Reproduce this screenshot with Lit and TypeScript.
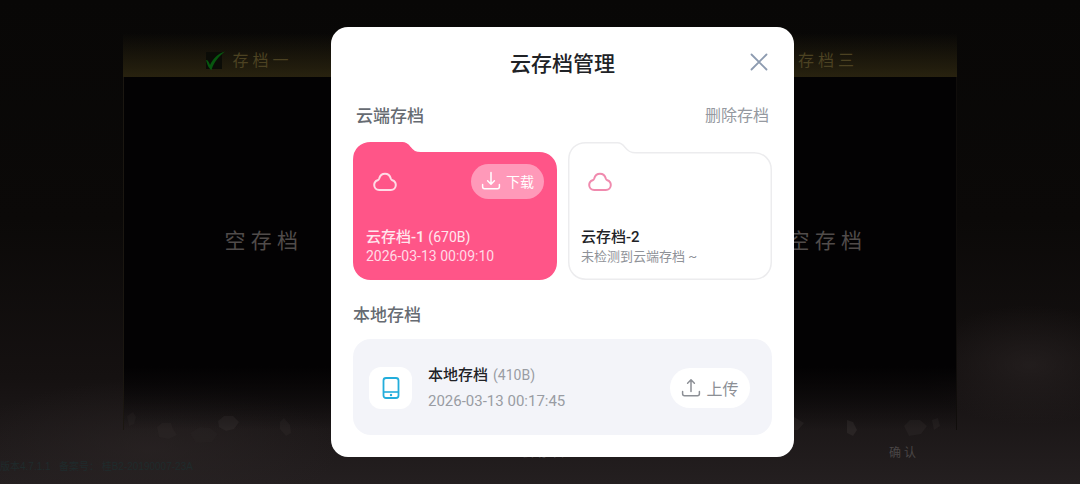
import { LitElement, html, svg, css } from "lit";
import { customElement, property } from "lit/decorators.js";

const arrowTray = (up: boolean) => html`
  <svg width="20" height="20" viewBox="0 0 20 20" fill="none" stroke="currentColor"
    stroke-width="1.5" stroke-linecap="round" stroke-linejoin="round" aria-hidden="true">
    ${up
      ? svg`<path d="M10 13.500V2M6.600 5.200 10 1.800l3.400 3.400" />`
      : svg`<path d="M10 1.500V13M6.600 9.800 10 13.200l3.400-3.400" />`}
    <path d="M1.600 13.600v2.200c0 1.200.8 2 2 2h12.800c1.200 0 2-.8 2-2v-2.200" />
  </svg>`;

@customElement("save-folder")
class SaveFolder extends LitElement {
  @property({ type: Boolean }) filled = false;

  static styles = css`
    :host { display: grid; min-width: 0; }
    .shape, .content { grid-area: 1 / 1; }
    .shape { width: 100%; height: 100%; display: block; }
    .edge { fill: #ffffff; stroke: #ececee; stroke-width: 1.5; }
    .edge.filled { fill: #ff5588; stroke: #ff5588; }
    .content {
      display: flex; flex-direction: column; justify-content: space-between;
      min-height: 138px; box-sizing: border-box; padding: 20px 13px 14px;
      color: #8f9298; font-size: 13px;
    }
    .content.filled { color: #ffdbe6; font-size: 14px; }
    .top { display: flex; justify-content: space-between; align-items: center; height: 38px; padding-left: 6px; }
    .cloud { color: #f08aae; display: block; }
    .filled .cloud { color: #ffdbe6; }
    .text { display: flex; flex-direction: column; line-height: 19px; }
  `;

  render() {
    const kind = this.filled ? "filled" : "";
    return html`
      <svg class="shape" viewBox="0 0 205 138" preserveAspectRatio="none" aria-hidden="true">
        <path class="edge ${kind}"
          d="M.75 18C.75 7 8 .75 18 .75h31.500c3.500 0 5.500 1.500 7.500 4.250 3.500 4.500 6 5.750 11 5.750h119c10 0 17.250 7.250 17.250 17.250v92c0 10-7.250 17.250-17.250 17.250H18C8 137.250.75 130 .75 120z" />
      </svg>
      <div class="content ${kind}">
        <div class="top">
          <svg class="cloud" width="26" height="22" viewBox="0 0 26 22" fill="none"
            stroke="currentColor" stroke-width="2" stroke-linejoin="round" aria-hidden="true">
            <path d="M7.200 20h11.600c2.900 0 5-2.200 5-4.900 0-2.400-1.300-4.200-3.500-4.900-.9-.3-1.200-.8-1.500-1.700C17.900 5.500 15.800 3.800 13 3.800S8.100 5.500 7.200 8.500c-.3.9-.6 1.400-1.500 1.700-2.200.7-3.500 2.500-3.500 4.900 0 2.700 2.100 4.900 5 4.900z" />
          </svg>
          <slot name="action"></slot>
        </div>
        <div class="text"><slot></slot></div>
      </div>`;
  }
}

@customElement("game-backdrop")
class GameBackdrop extends LitElement {
  static styles = css`
    :host { display: grid; min-height: 100vh; background: linear-gradient(#080706, #0b0908 45%, #151111 78%, #241f20); }
    .scenery, .stage { grid-area: 1 / 1; }
    .scenery { width: 100%; height: 100%; min-height: 0; display: block; contain: size; }
    .stage {
      display: flex; flex-direction: column; min-width: 0;
      padding-top: 33px; padding-bottom: 11px;
      font-family: "Liberation Serif", "Noto Sans CJK SC", serif;
      color: #504b4a; z-index: 1;
    }
    .panel { flex: 1; display: flex; flex-direction: column; margin: 0 11.4%; }
    .heads, .slots { display: grid; grid-template-columns: 275fr 297fr 262fr; justify-items: center; align-items: center; }
    .heads {
      height: 44px; padding-top: 11px; box-sizing: border-box;
      background: linear-gradient(rgba(38, 33, 18, 0), #28220f);
      font-size: 16px; line-height: 20px; color: #4c4222;
    }
    .head { display: flex; align-items: center; gap: 8px; }
    .checked { padding-right: 28px; }
    .slots {
      flex: 1; padding-bottom: 26px; box-sizing: border-box;
      background: linear-gradient(#030203 82%, rgba(3, 2, 3, 0));
      border-left: 1px solid #1b1711; border-right: 1px solid #100d0b;
      font-size: 21px; line-height: 28px;
    }
    .actions { display: grid; grid-template-columns: 1fr auto 1fr; margin: 0 11.4%; padding: 15px 41px 0 47px; }
    .action {
      grid-column: 2; border: 0; padding: 0; background: none; color: #4a4646;
      font: inherit; font-size: 12px; line-height: 16px;
    }
    .last { grid-column: 3; justify-self: end; }
    .version { font-size: 10px; line-height: 12px; color: #1f2b2c; font-family: "Liberation Sans", "Noto Sans CJK SC", sans-serif; white-space: pre; }
  `;

  render() {
    return html`
      <svg class="scenery" viewBox="0 0 1080 484" preserveAspectRatio="none" aria-hidden="true">
        <defs>
          <radialGradient id="fog"><stop offset="0" stop-color="#2b2525" stop-opacity=".6" /><stop offset="1" stop-color="#2b2525" stop-opacity="0" /></radialGradient>
        </defs>
        <ellipse cx="150" cy="450" rx="190" ry="70" fill="url(#fog)" />
        <ellipse cx="1030" cy="365" rx="110" ry="60" fill="url(#fog)" />
      </svg>
      <div class="stage">
        <div class="panel">
          <div class="heads">
            <span class="head checked">
              <svg width="20" height="20" viewBox="0 0 20 20" aria-hidden="true">
                <path d="M1 1h16v17H1z" fill="#0b0c07" />
                <path d="M1 9c2 0 3 2 4 5C8 8 12 3 20 .5 14 5 9 11 6.500 19 4 18 2 13 1 9z" fill="#07560f" />
              </svg>存 档 一</span>
            <span class="head"></span>
            <span class="head">存 档 三</span>
          </div>
          <div class="slots"><span>空 存 档</span><span></span><span>空 存 档</span></div>
        </div>
        <div class="actions">
          <button class="action">云 存 档</button>
          <button class="action last">确 认</button>
        </div>
        <div class="version">版本4.7.1.1   备案号： 桂B2-20190007-23A</div>
      </div>
      <svg class="scenery" viewBox="0 0 1080 484" preserveAspectRatio="none" aria-hidden="true">
        <g fill="#292424">
          <path d="M218 421l6-5h9l6 6-5 7-8 2-7-4z" />
          <path d="M157 427l5-4h9l2 6 4 6-8 4-10-2z" opacity=".7" />
          <path d="M280 422l4-4 6 7 1 8-5 3-6-7z" opacity=".6" />
          <path d="M127 416l6-4 3 5-2 7-5 2z" opacity=".7" />
          <path d="M190 433l10-6 10 1 8 6-6 8-16 1z" opacity=".4" />
          <path d="M794 417l10 6-6 7h-4z" opacity=".8" />
          <path d="M847 420l6 2 4 8-4 6-6-3z" />
          <path d="M904 426l6-6h10l7 6-6 8-12 2z" opacity=".6" />
          <path d="M932 420l6-2 2 8-6 4z" opacity=".6" />
        </g>
      </svg>`;
  }
}

@customElement("app-root")
class AppRoot extends LitElement {
  static styles = css`
    :host {
      display: grid; min-height: 100vh;
      font-family: Roboto, "Noto Sans CJK SC", sans-serif; color: #202226;
    }
    .backdrop, .overlay { grid-area: 1 / 1; min-width: 0; }
    .overlay { display: grid; place-items: center; padding-left: 45px; z-index: 2; }
    .dialog {
      width: 100%; max-width: 463px; box-sizing: border-box; padding: 21px 22px 22px;
      background: #ffffff; border-radius: 17px;
      display: flex; flex-direction: column;
    }
    button { border: 0; margin: 0; font: inherit; cursor: pointer; }
    .bar { display: grid; grid-template-columns: 1fr auto 1fr; align-items: start; height: 32px; }
    .title { grid-column: 2; margin: 0; font-size: 21px; line-height: 32px; font-weight: 500; }
    .close { justify-self: end; display: flex; padding: 5px 4px; background: none; color: #8d9bb0; }
    .row { display: flex; justify-content: space-between; align-items: center; margin-top: 23px; padding: 0 3px; }
    .section { margin: 0; font-size: 17px; line-height: 26px; font-weight: 500; color: #666b72; }
    .delete { padding: 0; background: none; font-size: 16px; line-height: 26px; color: #9599a0; }
    .folders { display: grid; grid-template-columns: 1fr 1fr; gap: 11px; margin-top: 13px; }
    .pill { display: flex; align-items: center; justify-content: center; white-space: nowrap; }
    .download { gap: 5px; width: 73px; height: 35px; padding: 0; border-radius: 18px; background: #ff99b9; color: #ffffff; font-size: 14px; }
    .upload { gap: 5px; width: 80px; height: 40px; padding: 0; border-radius: 20px; background: #ffffff; color: #8c8f95; font-size: 16px; }
    .name { font-size: 15px; font-weight: 500; color: #202226; }
    .light { color: #ffe6ee; }
    .size { font-size: 14px; font-weight: 400; }
    .second { margin-top: 22px; }
    .local {
      display: flex; align-items: center; gap: 16px; margin-top: 11px; padding: 23px 22px 21px 16px;
      border-radius: 18px; background: #f3f4f9; color: #999ca3;
    }
    .tile { display: grid; place-items: center; width: 43px; height: 42px; border-radius: 12px; background: #ffffff; color: #23addb; }
    .info { flex: 1; display: flex; flex-direction: column; font-size: 15px; line-height: 26px; }
    .muted { margin-left: 5px; color: #999ca3; }
  `;

  render() {
    return html`
      <game-backdrop class="backdrop"></game-backdrop>
      <div class="overlay">
        <section class="dialog" role="dialog" aria-labelledby="title">
          <header class="bar">
            <h1 class="title" id="title">云存档管理</h1>
            <button class="close" aria-label="关闭">
              <svg width="18" height="18" viewBox="0 0 18 18" fill="none" stroke="currentColor" stroke-width="1.8" stroke-linecap="round">
                <path d="M1.500 1.500l15 15M16.500 1.500l-15 15" />
              </svg>
            </button>
          </header>
          <div class="row">
            <h2 class="section">云端存档</h2>
            <button class="delete">删除存档</button>
          </div>
          <div class="folders">
            <save-folder filled>
              <button class="pill download" slot="action">${arrowTray(false)}下载</button>
              <span class="name light">云存档-1 <span class="size">(670B)</span></span>
              <span>2026-03-13 00:09:10</span>
            </save-folder>
            <save-folder>
              <span class="name">云存档-2</span>
              <span>未检测到云端存档 ~</span>
            </save-folder>
          </div>
          <h2 class="section second">本地存档</h2>
          <div class="local">
            <span class="tile">
              <svg width="18" height="24" viewBox="0 0 18 24" fill="none" stroke="currentColor" stroke-width="1.8" aria-hidden="true">
                <rect x="1.500" y="2" width="15" height="20" rx="2.500" />
                <path d="M1.500 16h15" stroke-width="1.600" />
                <circle cx="9" cy="19" r="1.200" fill="currentColor" stroke="none" />
              </svg>
            </span>
            <div class="info">
              <span class="name">本地存档<span class="size muted">(410B)</span></span>
              <span>2026-03-13 00:17:45</span>
            </div>
            <button class="pill upload">${arrowTray(true)}上传</button>
          </div>
        </section>
      </div>`;
  }
}
